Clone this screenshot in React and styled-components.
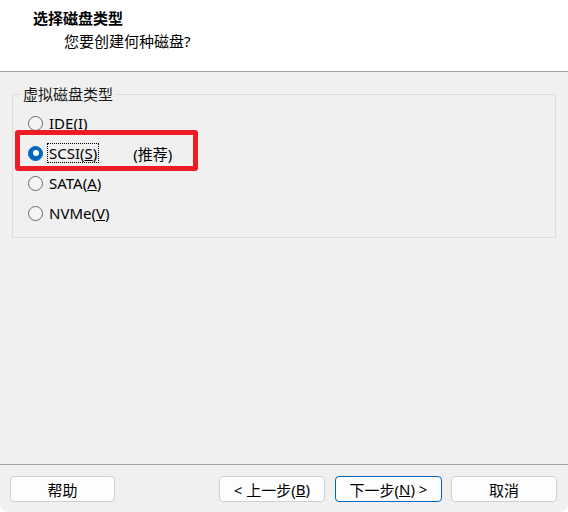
import React from "react";
import styled, { createGlobalStyle } from "styled-components";

const Global = createGlobalStyle`
  html, body { margin: 0; padding: 0; background: #ffffff; }
  body { font-family: "Noto Sans", "Noto Sans CJK SC", sans-serif; font-size: 15px; color: #000; }
`;

const Window = styled.div`
  width: 568px;
  height: 512px;
  display: flex;
  flex-direction: column;
  background: #f0f0f0;
  border-bottom-left-radius: 8px;
  border-bottom-right-radius: 8px;
  overflow: hidden;
`;

const Header = styled.div`
  height: 72px;
  background: #ffffff;
  border-bottom: 1px solid #a0a0a0;
  display: flex;
  flex-direction: column;
  padding: 8px 0 0 33px;
  box-sizing: border-box;
  gap: 3px;
`;

const Title = styled.div`
  font-weight: bold;
  font-size: 15px;
  line-height: 20px;
`;

const Subtitle = styled.div`
  font-size: 15px;
  line-height: 20px;
  padding-left: 31px;
`;

const Body = styled.div`
  flex: 1;
  padding: 12px 12px 0 12px;
`;

const GroupBox = styled.fieldset`
  margin: 0;
  width: 544px;
  box-sizing: border-box;
  border: 1px solid #dcdcdc;
  padding: 4px 0 9px 15px;
  position: relative;
`;

const Legend = styled.legend`
  padding: 0 2px;
  margin-left: -7px;
  font-size: 15px;
  line-height: 20px;
  color: #1a1a1a;
`;

const RadioRow = styled.label`
  display: flex;
  align-items: center;
  height: 30px;
  gap: 4px;
  position: relative;
`;

const RadioCircle = styled.span`
  width: 15px;
  height: 15px;
  border-radius: 50%;
  box-sizing: border-box;
  flex: none;
  display: flex;
  align-items: center;
  justify-content: center;
  border: 1px solid ${(p) => (p.$checked ? "#0067c0" : "#6a6a6a")};
  background: ${(p) => (p.$checked ? "#0067c0" : "#f4f4f4")};
  &::after {
    content: "";
    display: ${(p) => (p.$checked ? "block" : "none")};
    width: 6px;
    height: 6px;
    border-radius: 50%;
    background: #ffffff;
  }
`;

const RadioText = styled.span`
  line-height: 18px;
  padding: 0 1px;
  border: 1px dotted ${(p) => (p.$focused ? "#000" : "transparent")};
`;

const Hint = styled.span`
  margin-left: 30px;
`;

const Highlight = styled.div`
  position: absolute;
  left: -13px;
  top: -8px;
  width: 183px;
  height: 41px;
  border: 5px solid #ee1c25;
  border-radius: 3px;
  box-sizing: border-box;
  pointer-events: none;
`;

const Footer = styled.div`
  height: 48px;
  border-top: 1px solid #a0a0a0;
  display: flex;
  align-items: flex-start;
  padding: 11px 11px 0 10px;
  box-sizing: border-box;
`;

const Button = styled.button`
  width: ${(p) => p.$w || 105}px;
  height: 26px;
  margin-left: ${(p) => p.$ml || 0}px;
  background: #fdfdfd;
  border: 1px solid ${(p) => (p.$default ? "#0067c0" : "#d0d0d0")};
  border-radius: 4px;
  font-family: "Noto Sans", "Noto Sans CJK SC", sans-serif;
  font-size: 15px;
  color: #000;
  padding: 0;
  display: flex;
  align-items: center;
  justify-content: center;
`;

const U = styled.span`
  text-decoration: underline;
`;

const options = [
  { label: "IDE", key: "I" },
  { label: "SCSI", key: "S", checked: true },
  { label: "SATA", key: "A" },
  { label: "NVMe", key: "V" },
];

export default function App() {
  return (
    <>
      <Global />
      <Window>
        <Header>
          <Title>选择磁盘类型</Title>
          <Subtitle>您要创建何种磁盘?</Subtitle>
        </Header>
        <Body>
          <GroupBox>
            <Legend>虚拟磁盘类型</Legend>
            {options.map((o) => (
              <RadioRow key={o.label}>
                {o.checked && <Highlight />}
                <RadioCircle $checked={o.checked} />
                <RadioText $focused={o.checked}>
                  {o.label}(<U>{o.key}</U>)
                </RadioText>
                {o.checked && <Hint>(推荐)</Hint>}
              </RadioRow>
            ))}
          </GroupBox>
        </Body>
        <Footer>
          <Button $w={105}>帮助</Button>
          <Button $w={106} $ml={104}>&lt; 上一步(<U>B</U>)</Button>
          <Button $w={107} $ml={10} $default>下一步(<U>N</U>) &gt;</Button>
          <Button $w={106} $ml={9}>取消</Button>
        </Footer>
      </Window>
    </>
  );
}
